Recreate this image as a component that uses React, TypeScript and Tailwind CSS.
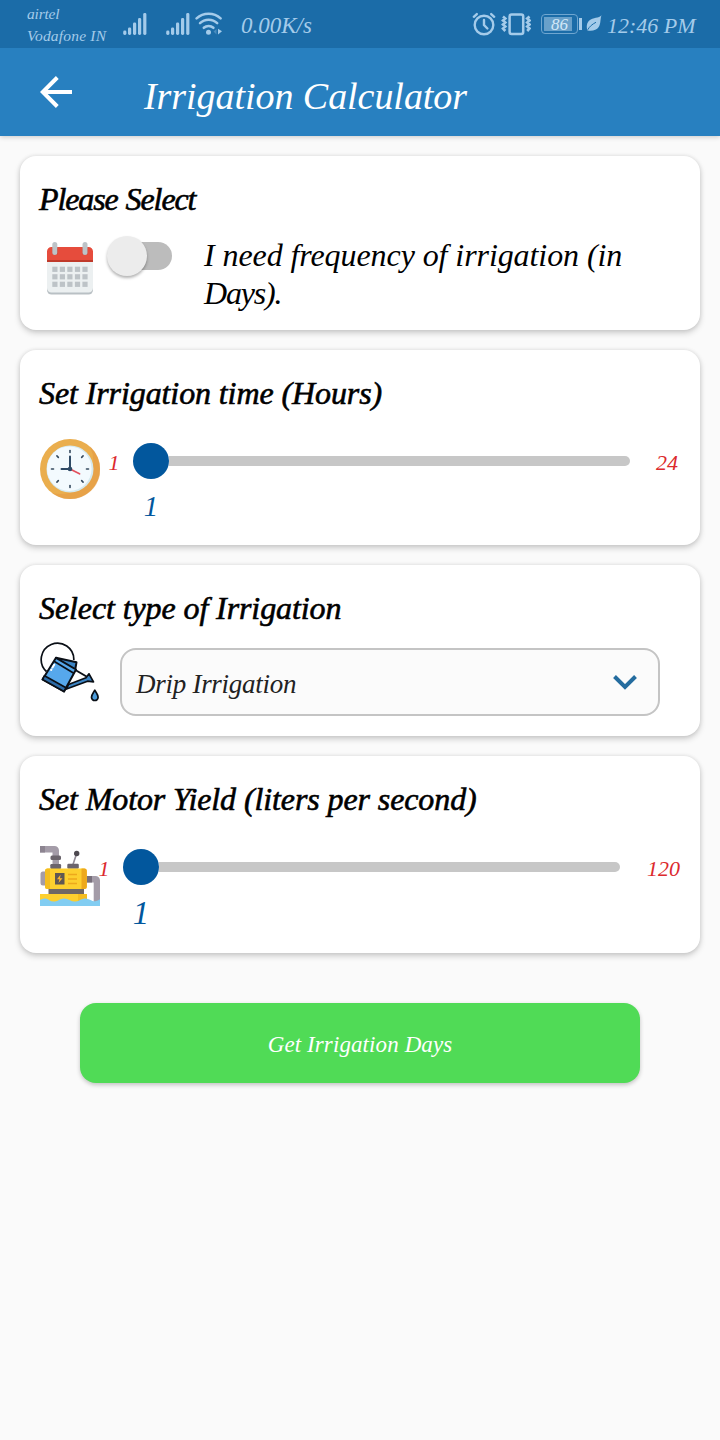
import type { ReactNode } from "react";

function Signal() {
  return (
    <svg width="24" height="24" viewBox="0 0 24 24" fill="currentColor">
      <rect x="0.200" y="18.500" width="3.200" height="4.500" rx="1.400" />
      <rect x="5" y="15.500" width="3.200" height="7.500" rx="1.400" />
      <rect x="10" y="10.500" width="3.200" height="12.500" rx="1.400" />
      <rect x="15" y="6" width="3.200" height="17" rx="1.400" />
      <rect x="20.200" y="1" width="3.200" height="22" rx="1.400" />
    </svg>
  );
}

function Wifi() {
  return (
    <svg width="28" height="24" viewBox="0 0 28 24" fill="none" stroke="currentColor" strokeWidth="2.500" strokeLinecap="round">
      <path d="M1.600 6.400a17.500 17.500 0 0 1 24 0" />
      <path d="M5 11.200a12.300 12.300 0 0 1 17.200 0" />
      <path d="M8.800 15.800a7.200 7.200 0 0 1 9.600 0" />
      <circle cx="13.500" cy="20.300" r="2.500" fill="currentColor" stroke="none" />
      <path d="M21.500 17v5.500l-3-3z" fill="currentColor" stroke="none" opacity="0.35" />
      <path d="M23 16.800v5.800l4-3.400z" fill="currentColor" stroke="none" />
    </svg>
  );
}

function Alarm() {
  return (
    <svg width="24" height="24" viewBox="0 0 24 24" fill="none" stroke="currentColor" strokeWidth="2.400" strokeLinecap="round">
      <circle cx="12" cy="13" r="9.300" />
      <path d="M12 8v5l3.400 3.500M1.800 4.800l3-2.700M22.200 4.800l-3-2.700" />
    </svg>
  );
}

function Vibrate() {
  return (
    <svg width="30" height="24" viewBox="0 0 30 24" fill="none" stroke="currentColor">
      <rect x="8.600" y="2.400" width="13.600" height="19.500" rx="2" strokeWidth="2.500" />
      <path
        d="M2 4.500l2.300 2-2.300 2 2.300 2-2.300 2 2.300 2-2.300 2 2.300 2.500M28.500 4.500l-2.300 2 2.300 2-2.300 2 2.300 2-2.300 2 2.300 2-2.300 2.500"
        strokeWidth="2.600"
      />
    </svg>
  );
}

function Leaf() {
  return (
    <svg width="16" height="17" viewBox="0 0 16 17">
      <path d="M15.500 0.300C13 3.300 7 2.500 3.300 5.500.5 8 .3 12 1.500 15.500c5 .8 9-.3 11.200-3.500 2.300-3.300 1.300-7.500 2.800-11.700z" fill="currentColor" />
      <path d="M1.700 14.800C3.500 11.500 6.500 9 10 7.300" stroke="#1b6ca8" strokeWidth="1" fill="none" />
    </svg>
  );
}

function CalendarIcon() {
  const xs = [12.300, 19.800, 27.300, 34.900, 42.400];
  const ys = [28.700, 36.200, 43.700];
  return (
    <svg width="60" height="60" viewBox="0 0 60 60">
      <path d="M7 50h46v2a4.500 4.500 0 0 1-4.500 4.500h-37A4.500 4.500 0 0 1 7 52z" fill="#b9c0c4" />
      <path d="M7 22h46v28a4.500 4.500 0 0 1-4.500 4.500h-37A4.500 4.500 0 0 1 7 50z" fill="#ecf0f1" />
      <path d="M7 24V13.500A4.500 4.500 0 0 1 11.500 9h37a4.500 4.500 0 0 1 4.500 4.500V24z" fill="#e64c3c" />
      <rect x="7" y="22" width="46" height="2" fill="#c03a2b" />
      <rect x="12.300" y="9" width="5.400" height="8" rx="2" fill="#c03a2b" />
      <rect x="42.300" y="9" width="5.400" height="8" rx="2" fill="#c03a2b" />
      <rect x="12.300" y="4" width="5" height="13" rx="2.500" fill="#bdc3c7" />
      <rect x="42.500" y="4" width="5" height="13" rx="2.500" fill="#bdc3c7" />
      {ys.map((y) => xs.map((x) => <rect key={`${x}-${y}`} x={x} y={y} width="5.200" height="5.200" fill="#bdc3c7" />))}
    </svg>
  );
}

function ClockIcon() {
  const ticks = [0, 45, 90, 135, 180, 225, 270, 315];
  return (
    <svg width="60" height="60" viewBox="0 0 60 60">
      <circle cx="30" cy="30" r="30" fill="#eaae4e" />
      <path d="M50 7.600A30 30 0 0 1 12 54 33 33 0 0 0 50 7.600z" fill="#e49542" opacity="0.500" />
      <circle cx="30" cy="30" r="23.500" fill="#d5e9ee" />
      <circle cx="29.300" cy="29.700" r="22.300" fill="#f3fafe" />
      {ticks.map((a) => (
        <path key={a} d="M30 11.500v2" stroke="#34495e" strokeWidth="1.600" strokeLinecap="round" transform={`rotate(${a} 30 30)`} />
      ))}
      <path d="M30 30l9.500 4.800" stroke="#e2515e" strokeWidth="1.800" strokeLinecap="round" />
      <path d="M30 17.500V30h-8.500" stroke="#2f4a66" strokeWidth="2" fill="none" strokeLinecap="round" />
      <circle cx="30" cy="30" r="2.300" fill="#2f4a66" />
    </svg>
  );
}

function WateringCanIcon() {
  return (
    <svg width="60" height="60" viewBox="0 0 60 60" fill="none" stroke="#0a0f16" strokeWidth="2" strokeLinejoin="round">
      <path d="M6.500 29.500A16.300 16.300 0 1 1 33.800 18" strokeWidth="1.700" />
      <path d="M16 15.800l20.500 4.500-1.200 6.700-3.300 1.500z" fill="#3d85c4" />
      <path d="M34.500 27.500L46.500 34.500" />
      <path d="M28.500 42.500L46 35.800l3-4 4.500 8-6-.6L26.500 47z" fill="#3d85c4" strokeWidth="1.700" />
      <path d="M16 15.800L36 27.500 24 49.500 2.500 37.500z" fill="#56a8ec" />
      <path d="M2.500 37.500l2-3.800L26 45.700 24 49.500z" fill="#2d6ca8" strokeWidth="1.700" />
      <path d="M14 19.300l19.800 12" strokeWidth="1.700" />
      <path d="M14.200 22.700l-1.700 2.800M11.400 27.500l-.3.500" stroke="#fff" strokeLinecap="round" />
      <path d="M54.800 48.200c-1.500 2.800-3.300 4.500-3.300 7a3.300 3.300 0 0 0 6.600 0c0-2.500-1.800-4.200-3.300-7z" fill="#4c9cdb" strokeWidth="1.700" />
    </svg>
  );
}

function PumpIcon() {
  return (
    <svg width="60" height="60" viewBox="0 0 60 60">
      <path d="M0 0h14.500a4.500 4.500 0 0 1 4.500 4.500V20h-6.500V6.500H0z" fill="#a49ca8" />
      <path d="M0 0h5v6.500H0z" fill="#8c8490" />
      <rect x="10.500" y="9.500" width="10.500" height="4.500" rx="1.500" fill="#6b646c" />
      <rect x="10.300" y="18" width="10.800" height="5" rx="1.200" fill="#6b646c" />
      <path d="M33 18.500L36.500 8" stroke="#8f8994" strokeWidth="1.600" />
      <circle cx="36.700" cy="7.500" r="2.700" fill="#4d4950" />
      <rect x="27.300" y="17.800" width="11.500" height="5" rx="1.200" fill="#6b646c" />
      <path d="M46 30h9.500a4.500 4.500 0 0 1 4.500 4.500V56h-6.300V36.500H46z" fill="#a49ca8" />
      <path d="M46 30h6v6.500h-6z" fill="#776f7b" />
      <path d="M6 25.500H3a2.500 2.500 0 0 0-2.500 2.500v9A2.500 2.500 0 0 0 3 39.500h3z" fill="#a49ca8" />
      <rect x="8.500" y="42" width="35.500" height="7" fill="#6f6764" />
      <rect x="5" y="22.500" width="41.800" height="20.500" rx="2.500" fill="#fdcf2e" />
      <path d="M5 25a2.500 2.500 0 0 1 2.500-2.500H10V43H7.500A2.500 2.500 0 0 1 5 40.500z" fill="#f4bd20" />
      <path d="M41.500 22.500h2.800a2.500 2.500 0 0 1 2.500 2.500v15.500a2.500 2.500 0 0 1-2.500 2.500h-2.800z" fill="#eda81c" />
      <rect x="15" y="27" width="9.500" height="11.500" fill="#5f5753" />
      <path d="M20.500 28.800l-3.500 4.500h2.500L18.500 37l4-4.700H20z" fill="#fdb62f" />
      <path d="M28 28.500h9M28 33h9M28 37.500h9" stroke="#eda81c" strokeWidth="1.500" />
      <path d="M0 48h47v8H0z" fill="#fdcf2e" />
      <path d="M38 48h9v8h-9z" fill="#f4bd20" />
      <path d="M0 54c4-2 6-2 9 0s6 2 10 0 7-2 10.500 0 6.500 2 10.500 0 7-2 10.500 0 5.500 1.500 9.500-.8V60H0z" fill="#82cdf2" />
    </svg>
  );
}

function Card({ className, children }: { className: string; children: ReactNode }) {
  return (
    <section className={`flex flex-col rounded-[16px] bg-white px-5 pt-[23px] shadow-[0_3px_6px_rgba(0,0,0,0.18),0_0_4px_rgba(0,0,0,0.10)] ${className}`}>
      {children}
    </section>
  );
}

function Heading({ className, children }: { className: string; children: ReactNode }) {
  return (
    <h2 className={`-ml-px h-10 text-[32px] leading-10 whitespace-nowrap text-black [-webkit-text-stroke:0.6px_black] ${className}`}>{children}</h2>
  );
}

function Slider({ className, valueClass }: { className: string; valueClass: string }) {
  return (
    <div className={`flex flex-col ${className}`}>
      <div className="flex h-9 items-center">
        <div className="size-9 shrink-0 rounded-full bg-[#02579d]" />
        <div className="h-[10px] flex-1 rounded-r-[5px] bg-[#c7c7c7]" />
      </div>
      <div className={`w-9 text-center text-[#02579d] ${valueClass}`}>1</div>
    </div>
  );
}

export default function App() {
  return (
    <div className="flex h-[1440px] w-[720px] flex-col overflow-hidden bg-[#fafafa] italic [font-family:'Liberation_Serif',serif]">
      <div className="z-10 flex h-12 shrink-0 items-start bg-[#1b6ca8] pl-[27px] text-[#a4cbea]">
        <div className="w-[96px] pt-[3px] text-[15.5px] leading-[21.5px] whitespace-nowrap">
          <div className="tracking-[-0.2px]">airtel</div>
          <div className="tracking-[0.2px]">Vodafone IN</div>
        </div>
        <div className="flex w-[118px] pt-3">
          <Signal />
          <div className="ml-[19px]"><Signal /></div>
          <div className="ml-[5px]"><Wifi /></div>
        </div>
        <div className="w-[231px] pt-[14px] text-[23px] leading-6">0.00K/s</div>
        <div className="flex">
          <div className="pt-3"><Alarm /></div>
          <div className="ml-[5px] pt-3"><Vibrate /></div>
          <div className="mt-[14px] ml-[10px] flex h-5 w-[37px] items-center rounded-[4px] border-[1.5px] border-[#6fa6d0] px-[2px]">
            <div className="flex h-[14px] w-7 items-center justify-center bg-[#68a0ca] pt-px pl-[3px] text-[17px] leading-none text-[#d2e8f8]">86</div>
          </div>
          <div className="mt-[18px] ml-[1px] h-3 w-[3px] bg-[#a4cbea]" />
          <div className="ml-[4px] pt-[15px]"><Leaf /></div>
          <div className="ml-[5px] pt-[14px] text-[22px] leading-6 whitespace-nowrap">12:46 PM</div>
        </div>
      </div>

      <header className="flex h-[88px] shrink-0 items-center bg-[#2880c0] pl-10 text-white shadow-[0_1px_5px_rgba(0,0,0,0.2)]">
        <svg width="32" height="32" viewBox="0 0 32 32" fill="none" stroke="currentColor" strokeWidth="4">
          <path d="M32 16H3M17.300 1.500L2.800 16l14.500 14.500" />
        </svg>
        <h1 className="ml-[72px] pt-[7px] text-[38px] leading-[44px] tracking-[-0.05px] whitespace-nowrap">Irrigation Calculator</h1>
      </header>

      <main className="flex flex-col gap-5 px-5 pt-5">
        <Card className="h-[174px]">
          <Heading className="tracking-[-1.1px] [word-spacing:1px]">Please Select</Heading>
          <div className="mt-[17px] flex">
            <div className="mt-[2px]"><CalendarIcon /></div>
            <div className="ml-[7px] flex h-10 w-[65px] items-center">
              <div className="z-10 size-10 shrink-0 rounded-full bg-[#ececec] shadow-[0_2px_3px_rgba(0,0,0,0.3)]" />
              <div className="-ml-[34px] h-7 w-[59px] rounded-full bg-[#bcbcbc]" />
            </div>
            <p className="ml-8 w-[440px] text-[32px] leading-[38px] tracking-[-0.08px] text-black">
              I need frequency of irrigation (in
              <br />
              <span className="tracking-[-1.2px]">Days).</span>
            </p>
          </div>
        </Card>

        <Card className="h-[195px]">
          <Heading className="tracking-[-0.1px]">Set Irrigation time (Hours)</Heading>
          <div className="mt-[26px] flex">
            <ClockIcon />
            <div className="mt-[12px] ml-[8px] w-3 text-center text-[22px] leading-6 text-[#dc2a2e]">1</div>
            <Slider className="mt-[4px] ml-[13px] w-[497px]" valueClass="mt-[9px] text-[29px] leading-9" />
            <div className="mt-[12px] ml-[26px] text-[22px] leading-6 text-[#dc2a2e]">24</div>
          </div>
        </Card>

        <Card className="h-[171px]">
          <Heading className="tracking-[-0.1px]">Select type of Irrigation</Heading>
          <div className="mt-[14px] flex">
            <WateringCanIcon />
            <div className="mt-[6px] ml-5 flex h-[68px] w-[540px] items-center justify-between rounded-[16px] border-2 border-[#c4c4c4] bg-[#fbfbfb] pr-5 pl-[14px]">
              <span className="pt-[3px] text-[27px] leading-8 tracking-[-0.27px] whitespace-nowrap text-[#222]">Drip Irrigation</span>
              <svg width="26" height="16" viewBox="0 0 26 16" fill="none" stroke="#246c9f" strokeWidth="4">
                <path d="M2.500 2.500L13 13 23.500 2.500" />
              </svg>
            </div>
          </div>
        </Card>

        <Card className="h-[197px]">
          <Heading className="tracking-[-0.1px]">Set Motor Yield (liters per second)</Heading>
          <div className="mt-[27px] flex">
            <PumpIcon />
            <div className="mt-[11px] -ml-[2px] w-3 text-center text-[22px] leading-6 text-[#dc2a2e]">1</div>
            <Slider className="mt-[3px] ml-[13px] w-[497px]" valueClass="mt-[10px] text-[33px] leading-9" />
            <div className="mt-[11px] ml-[27px] text-[22px] leading-6 text-[#dc2a2e]">120</div>
          </div>
        </Card>

        <button className="mx-[60px] mt-[30px] h-20 rounded-[16px] bg-[#50db56] pt-[5px] text-[23px] tracking-[0.1px] text-white italic shadow-[0_2px_4px_rgba(0,0,0,0.22)]">
          Get Irrigation Days
        </button>
      </main>
    </div>
  );
}
